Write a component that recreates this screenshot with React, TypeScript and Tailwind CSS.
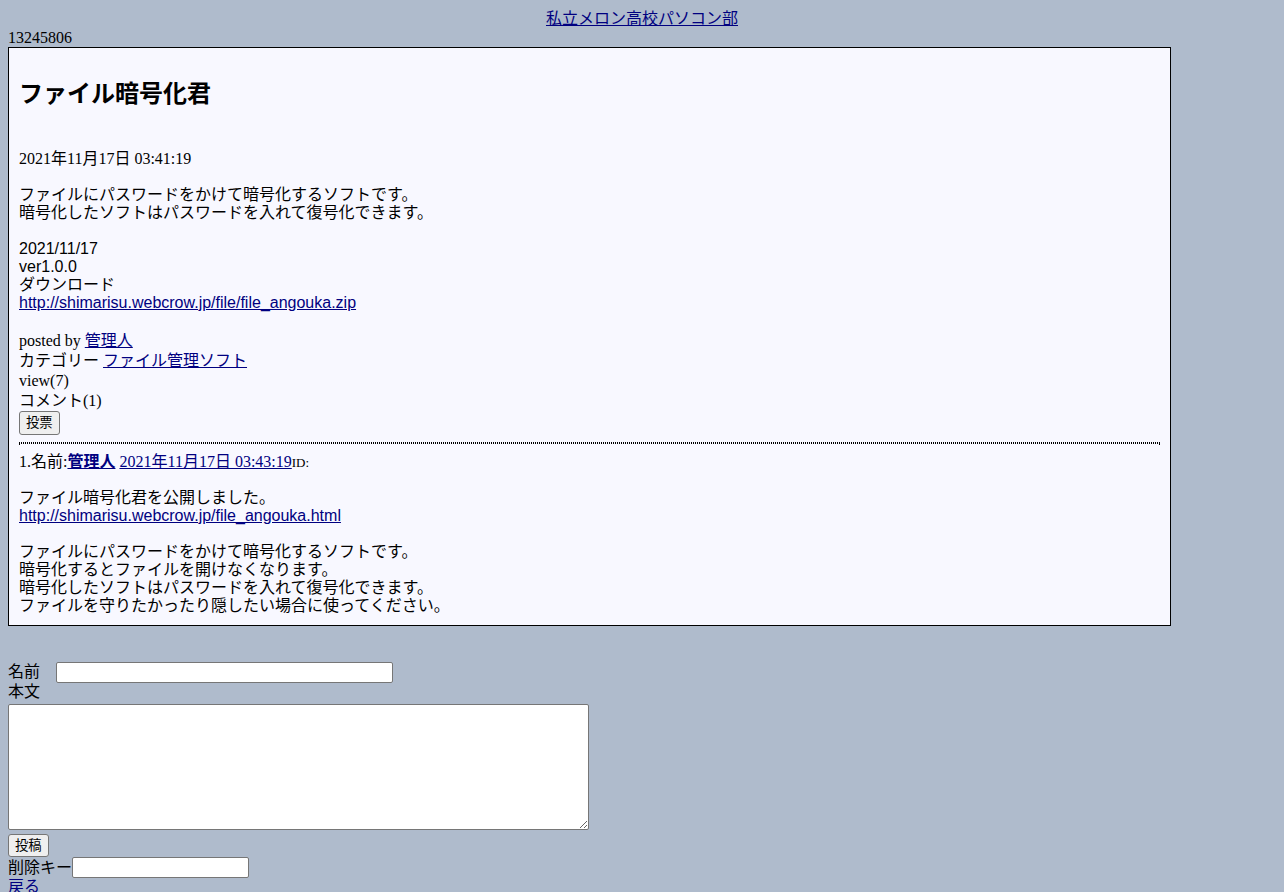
import React from "react";

const serif = "font-['Liberation_Serif','Noto_Sans_CJK_JP',serif]";
const sans = "font-['Liberation_Sans','Noto_Sans_CJK_JP',sans-serif]";

export default function App() {
  return (
    <div className={`min-h-[892px] bg-[#AFBBCC] p-2 text-[16px] text-black ${serif}`}>
      <div className="h-[21px] leading-[21px] text-center">
        <a href="#" className="text-[#000080] underline">私立メロン高校パソコン部</a>
      </div>
      <div className="h-[18px] leading-[18px]">13245806</div>
      <div className="box-content w-[90%] border border-black bg-[#F8F8FF] p-[10px]">
        <h2 className={`mt-[20px] mb-[40px] text-[24px] font-bold leading-[32px] ${sans}`}>
          ファイル暗号化君
        </h2>
        <div className="h-[18px] leading-[18px]">2021年11月17日 03:41:19</div>
        <div className={`mt-[18px] leading-[18px] ${sans}`}>
          <div>ファイルにパスワードをかけて暗号化するソフトです。</div>
          <div>暗号化したソフトはパスワードを入れて復号化できます。</div>
          <div className="h-[18px]" />
          <div>2021/11/17</div>
          <div>ver1.0.0</div>
          <div>ダウンロード</div>
          <div>
            <a href="#" className="text-[#000080] underline">
              http://shimarisu.webcrow.jp/file/file_angouka.zip
            </a>
          </div>
        </div>
        <div className="mt-[19px] h-[20px] leading-[20px]">
          posted by <a href="#" className="text-[#000080] underline">管理人</a>
        </div>
        <div className="h-[20px] leading-[20px]">
          カテゴリー <a href="#" className="text-[#000080] underline">ファイル管理ソフト</a>
        </div>
        <div className="h-[20px] leading-[20px]">view(7)</div>
        <div className="h-[20px] leading-[20px]">コメント(1)</div>
        <div className="flex">
          <button
            className={`h-[24px] rounded-[3px] border border-[#767676] bg-[#EFEFEF] px-[6px] text-[13.33px] leading-[20px] ${sans}`}
          >
            投票
          </button>
        </div>
        <div className="mt-[7px] mb-[8px] h-0 border border-dotted border-black" />
        <div className="h-[19px] leading-[19px]">
          1.名前:
          <a href="#" className="font-bold text-[#000080] underline">管理人</a>{" "}
          <a href="#" className="text-[#000080] underline">2021年11月17日 03:43:19</a>
          <span className="text-[13px]">ID:</span>
        </div>
        <div className={`mt-[18px] leading-[18px] ${sans}`}>
          <div>ファイル暗号化君を公開しました。</div>
          <div>
            <a href="#" className="text-[#000080] underline">
              http://shimarisu.webcrow.jp/file_angouka.html
            </a>
          </div>
          <div className="h-[18px]" />
          <div>ファイルにパスワードをかけて暗号化するソフトです。</div>
          <div>暗号化するとファイルを開けなくなります。</div>
          <div>暗号化したソフトはパスワードを入れて復号化できます。</div>
          <div>ファイルを守りたかったり隠したい場合に使ってください。</div>
        </div>
      </div>
      <div className={`mt-[35px] ${sans}`}>
        <div className="flex h-[22px] items-center">
          <span className="w-[48px] leading-[18px]">名前</span>
          <input className="h-[21px] w-[337px] rounded-[2px] border border-[#767676] bg-white" />
        </div>
        <div className="h-[18px] leading-[18px]">本文</div>
        <div className="mt-[3px] flex">
          <textarea className="h-[126px] w-[581px] resize rounded-[2px] border border-[#767676] bg-white" />
        </div>
        <div className="mt-[4px] flex">
          <button className="h-[23px] rounded-[3px] border border-[#767676] bg-[#EFEFEF] px-[6px] text-[13.33px] leading-[20px]">
            投稿
          </button>
        </div>
        <div className="flex h-[21px] items-center">
          <span className="leading-[18px]">削除キー</span>
          <input className="h-[21px] w-[177px] rounded-[2px] border border-[#767676] bg-white" />
        </div>
        <div className="leading-[18px]">
          <a href="#" className="text-[#000080]">戻る</a>
        </div>
      </div>
    </div>
  );
}
